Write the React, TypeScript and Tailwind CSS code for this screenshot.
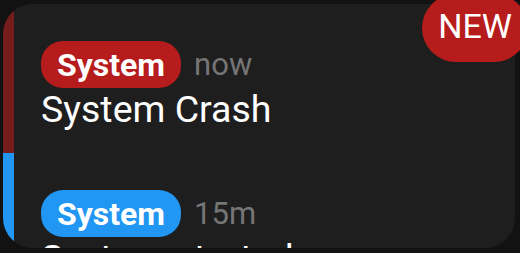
import React from 'react'

type Notice = {
  source: string
  time: string
  title: string
  tone: 'red' | 'blue'
}

const notices: Notice[] = [
  { source: 'System', time: 'now', title: 'System Crash', tone: 'red' },
  { source: 'System', time: '15m', title: 'System started', tone: 'blue' },
]

const App: React.FC = () => {
  return (
    <div
      className="relative h-[253px] w-[520px] overflow-hidden bg-[#121212] pt-[4px] pl-[3px]"
      style={{ fontFamily: 'Roboto, "Noto Sans", sans-serif' }}
    >
      {/* Card */}
      <div className="h-[244px] w-[512px] overflow-hidden rounded-[30px] bg-[#1e1e1e]">
        {notices.map((n, idx) => (
          <div
            key={idx}
            className={`h-[149px] border-l-[11px] pl-[27px] pt-[37px] ${
              n.tone === 'red' ? 'border-[#761c1c]' : 'border-[#2196f3]'
            }`}
          >
            <div className="flex items-center gap-[13px]">
              <span
                className={`flex h-[47px] items-center rounded-[22px] px-[16px] text-[32px] font-bold leading-none text-white ${
                  n.tone === 'red' ? 'bg-[#b71c1c]' : 'bg-[#2196f3]'
                }`}
              >
                {n.source}
              </span>
              <span className="text-[31px] leading-none text-[#757575]">{n.time}</span>
            </div>
            <div className="text-[37.5px] leading-[1.15] text-white">{n.title}</div>
          </div>
        ))}
      </div>

      {/* NEW badge */}
      <div className="absolute right-[-8px] top-[-6px] flex h-[68px] items-center rounded-full bg-[#b71c1c] px-[16px] pb-[4px] text-[34px] leading-none text-white">
        NEW
      </div>
    </div>
  )
}

export default App
